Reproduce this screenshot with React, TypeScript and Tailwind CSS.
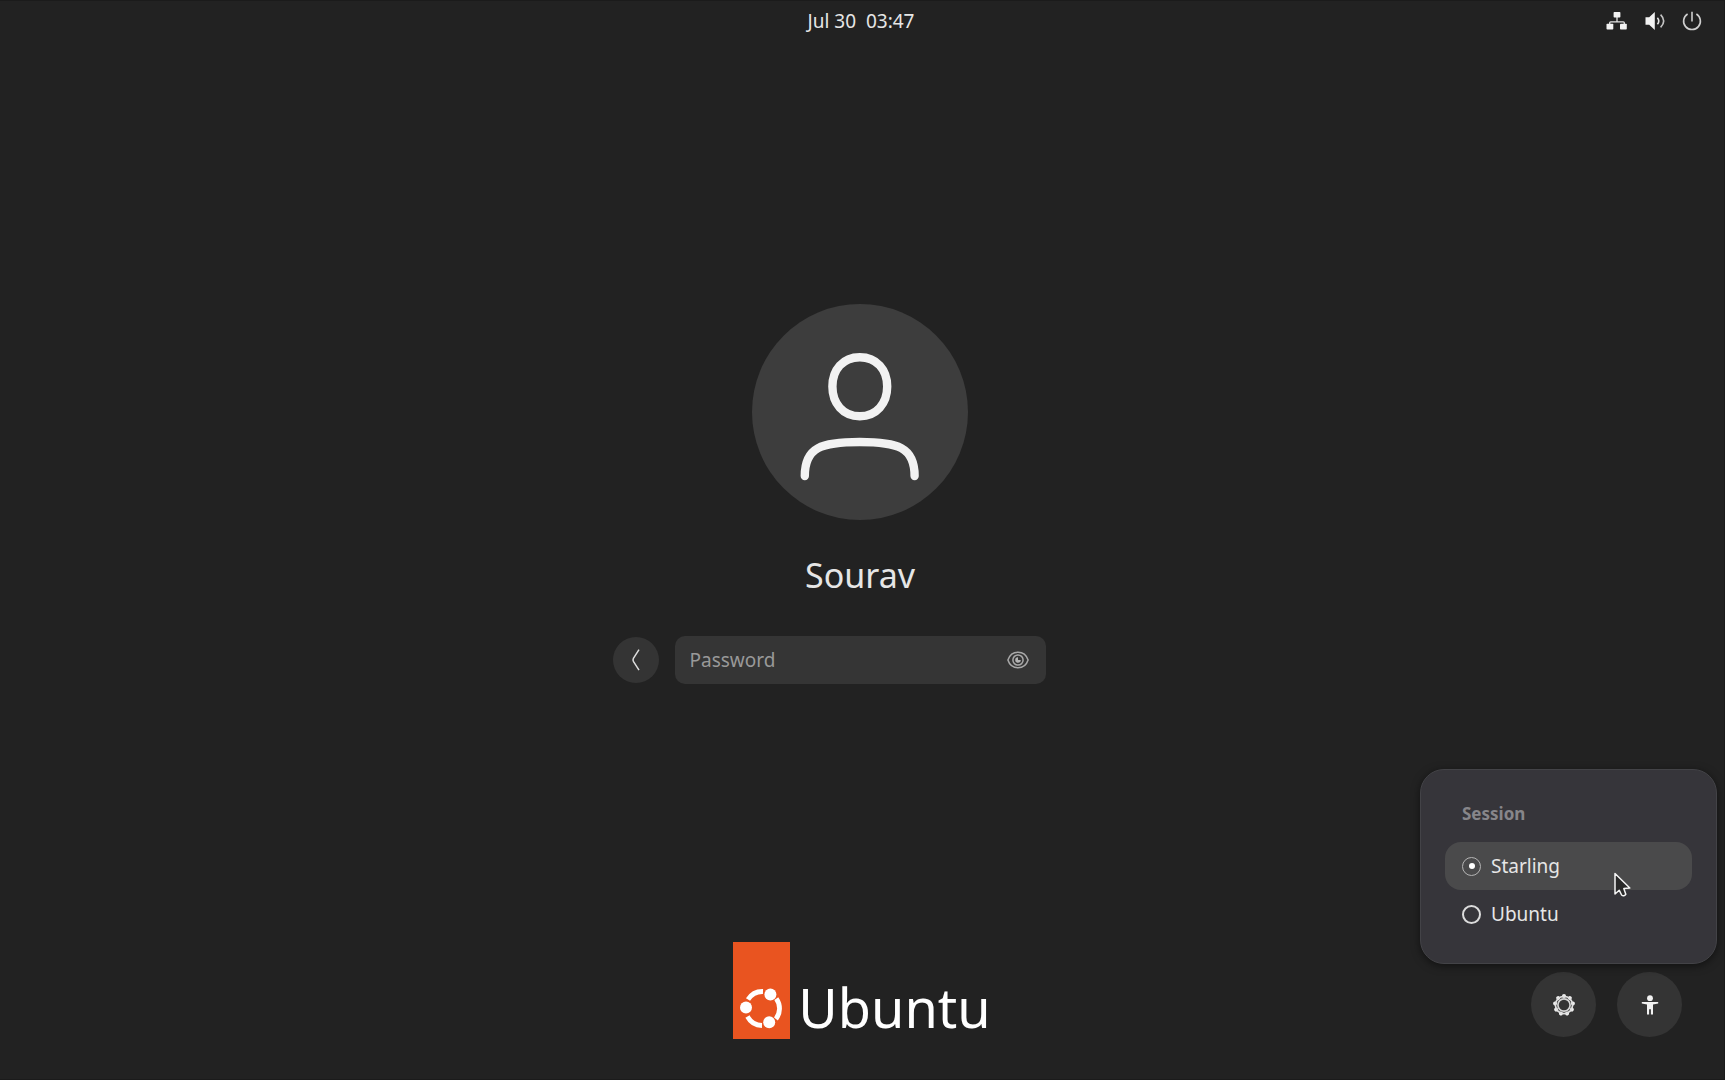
import React, { useState } from 'react'

const sessions = [
  { id: 'starling', name: 'Starling' },
  { id: 'ubuntu', name: 'Ubuntu' },
]

const gearTeeth = [0, 40, 80, 120, 160, 200, 240, 280, 320]

function NetworkIcon() {
  return (
    <svg className="h-5 w-[22px]" viewBox="0 0 22 20" fill="none" aria-hidden="true">
      <path d="M11 6v5M3.7 14v-2.2q0-1 1-1h12.6q1 0 1 1V14" stroke="#e4e4e4" strokeWidth="1.3" />
      <rect x="7.6" y="1" width="6.8" height="5.6" rx="0.8" fill="#f2f2f2" />
      <rect x="0.5" y="12.8" width="6.8" height="5.8" rx="0.8" fill="#f2f2f2" />
      <rect x="14" y="12.8" width="6.8" height="5.8" rx="0.8" fill="#f2f2f2" />
    </svg>
  )
}

function VolumeIcon() {
  return (
    <svg className="h-5 w-5" viewBox="0 0 20 20" fill="none" aria-hidden="true">
      <path d="M0.5 6.2h3.7L9.8 1v18l-5.6-5.2H0.5z" fill="#f2f2f2" />
      <path d="M12.4 6.7q2.8 3.3 0 6.6" stroke="#e4e4e4" strokeWidth="1.6" />
      <path d="M15.6 3.6q6.2 6.4 0 12.8" stroke="#c4c4c4" strokeWidth="1.6" />
    </svg>
  )
}

function PowerIcon() {
  return (
    <svg className="h-5 w-5" viewBox="0 0 20 20" fill="none" stroke="#cfcfcf" strokeWidth="1.6" aria-hidden="true">
      <path d="M10 0.8v9.6" />
      <path d="M5.6 3A8.4 8.4 0 1 0 14.4 3" />
    </svg>
  )
}

function EyeIcon() {
  return (
    <svg className="h-[18px] w-[22px]" viewBox="0 0 22 18" fill="none" stroke="#a8a8a8" aria-hidden="true">
      <path d="M0.9 9C2.6 3.8 6.4 1.2 11 1.2S19.4 3.8 21.1 9C19.4 14.2 15.6 16.8 11 16.8S2.6 14.2 0.9 9z" strokeWidth="1.5" />
      <circle cx="11" cy="9" r="5.1" strokeWidth="1.5" />
      <path d="M11 6.2A2.8 2.8 0 1 0 13.8 9H11z" fill="#b4b4b4" stroke="none" />
    </svg>
  )
}

function GearIcon() {
  return (
    <svg className="h-6 w-6" viewBox="0 0 24 24" fill="none" aria-hidden="true">
      {gearTeeth.map((angle) => (
        <circle key={angle} cx="12" cy="2.9" r="2" fill="#ededed" transform={`rotate(${angle} 12 12)`} />
      ))}
      <circle cx="12" cy="12" r="8.6" stroke="#e0e0e0" strokeWidth="1.7" />
      <circle cx="12" cy="12" r="6.1" stroke="#d4d4d4" strokeWidth="1.7" />
    </svg>
  )
}

function AccessibilityIcon() {
  return (
    <svg className="h-5 w-[18px]" viewBox="0 0 18 20" fill="#f2f2f2" aria-hidden="true">
      <circle cx="9" cy="3.2" r="2.9" />
      <path d="M0.8 7h16.4v1.6L12 9.6V19.5H9.9v-5.2H8.1v5.2H6V9.6L0.8 8.6z" />
    </svg>
  )
}

function Avatar() {
  return (
    <svg className="size-[216px]" viewBox="0 0 216 216" fill="none" stroke="#f2f2f2" strokeWidth="8.4" strokeLinecap="round" aria-hidden="true">
      <circle cx="108" cy="108" r="108" fill="#3d3d3d" stroke="none" />
      <path d="M107.8 53.2C124.6 53.2 135.2 65.6 135.2 82.5S124.6 112.2 107.8 112.2 80.4 99.4 80.4 82.5 91 53.2 107.8 53.2z" />
      <path d="M52.8 172C52.8 143 70 138 107.7 138S162.6 143 162.6 172" />
    </svg>
  )
}

function UbuntuLogo() {
  return (
    <div className="flex items-end">
      <svg className="h-[97px] w-[57px]" viewBox="0 0 57 97" fill="none" stroke="#fff" strokeWidth="4.8" aria-hidden="true">
        <rect width="57" height="97" fill="#e95420" stroke="none" />
        <path d="M15 57.6A17 17 0 0 1 30 49.5" />
        <path d="M43.3 56.6A17 17 0 0 1 42.9 77" />
        <path d="M14.5 74.5A17 17 0 0 0 29 83.5" />
        <g fill="#fff" stroke="none">
          <circle cx="13" cy="65.5" r="6" />
          <circle cx="37.4" cy="52.5" r="6" />
          <circle cx="36.2" cy="80.3" r="6" />
        </g>
      </svg>
      <span className="pb-0.5 pl-2 text-[54px] leading-[60px] text-white">Ubuntu</span>
    </div>
  )
}

function SessionMenu() {
  const [selected, setSelected] = useState('starling')

  return (
    <div className="absolute right-[3px] bottom-full mb-2 w-[297px] rounded-3xl border border-[#434347] bg-[#36353a] px-6 pt-6 pb-[25px] shadow-[0_2px_8px_rgba(0,0,0,0.5)]">
      <fieldset>
        <legend className="h-12 px-[17px] text-[17px] leading-10 font-bold text-[#87868a]">Session</legend>
        {sessions.map((session) => (
          <label
            key={session.id}
            className="flex h-12 items-center gap-2.5 rounded-2xl px-[17px] text-[19px] text-[#e6e6e6] has-checked:bg-[#4a4a4b]"
          >
            <input
              type="radio"
              name="session"
              value={session.id}
              checked={selected === session.id}
              onChange={() => setSelected(session.id)}
              className="grid size-[19px] appearance-none place-items-center rounded-full border-2 border-[#dcdcdc] checked:border checked:border-[#b4b4b4] checked:before:size-[6px] checked:before:rounded-full checked:before:bg-white"
            />
            {session.name}
          </label>
        ))}
      </fieldset>
      <svg className="pointer-events-none absolute top-[101px] left-[192px] h-[27px] w-[19px]" viewBox="0 0 19 27" aria-hidden="true">
        <path
          d="M2 2.5V23L6.2 19.2 8.6 24Q10.8 26 12.8 23.2L10.8 17.6 16.8 17z"
          fill="#2a2a2a"
          stroke="#f5f5f5"
          strokeWidth="1.5"
          strokeLinejoin="round"
        />
      </svg>
    </div>
  )
}

export default function App() {
  return (
    <div className="flex min-h-screen flex-col border-y border-r border-[#1b1b1b] bg-[#222222] pr-1 font-['Noto_Sans','Open_Sans',sans-serif] text-[#e6e6e6]">
      <header className="grid h-10 grid-cols-[1fr_auto_1fr] items-center pr-[18px]">
        <time className="col-start-2 pl-5 text-[19px] whitespace-pre">Jul 30  03:47</time>
        <div className="flex items-center justify-end gap-[17px]">
          <button type="button" aria-label="Network"><NetworkIcon /></button>
          <button type="button" aria-label="Volume"><VolumeIcon /></button>
          <button type="button" aria-label="Power"><PowerIcon /></button>
        </div>
      </header>

      <main className="flex flex-1 flex-col items-center justify-center pt-1">
        <Avatar />
        <h1 className="mt-8 text-[34px] leading-[46px]">Sourav</h1>
        <form className="mt-[38px] flex items-center gap-4" onSubmit={(e) => e.preventDefault()}>
          <button type="button" aria-label="Back" className="grid size-[46px] place-items-center rounded-full bg-[#343434]">
            <svg className="h-6 w-3" viewBox="0 0 12 24" fill="none" stroke="#dedede" strokeWidth="1.5" aria-hidden="true">
              <path d="M9 1.6L3.4 10.4Q2.6 12 3.4 13.4L9 22.2" />
            </svg>
          </button>
          <div className="flex h-12 w-[371px] items-center rounded-[10px] bg-[#353535] pr-[17px] pl-[15px]">
            <input
              type="password"
              aria-label="Password"
              placeholder="Password"
              className="h-12 min-w-0 flex-1 bg-transparent pt-px text-[19px] outline-none placeholder:text-[#999999]"
            />
            <button type="button" aria-label="Show password"><EyeIcon /></button>
          </div>
          <div className="w-[46px]" />
        </form>
      </main>

      <footer className="grid grid-cols-[1fr_auto_1fr] items-end pb-10">
        <div className="col-start-2 pl-1">
          <UbuntuLogo />
        </div>
        <div className="relative flex justify-end gap-[21px] pr-[38px] pb-0.5">
          <SessionMenu />
          <button type="button" aria-label="Session" className="grid size-[65px] place-items-center rounded-full bg-[#343434]">
            <GearIcon />
          </button>
          <button type="button" aria-label="Accessibility" className="grid size-[65px] place-items-center rounded-full bg-[#343434]">
            <AccessibilityIcon />
          </button>
        </div>
      </footer>
    </div>
  )
}
